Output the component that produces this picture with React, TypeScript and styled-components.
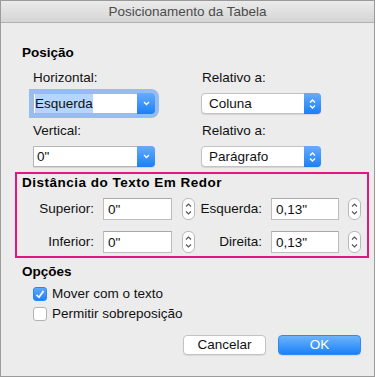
import React from 'react';
import styled, { createGlobalStyle } from 'styled-components';

const GlobalStyle = createGlobalStyle`
  html, body {
    margin: 0;
    padding: 0;
    background: #ffffff;
  }
  body {
    font-family: "Liberation Sans", Arial, sans-serif;
    font-size: 13.5px;
    color: #111;
  }
`;

// --- Window chrome ---
const Window = styled.div`
  box-sizing: border-box;
  width: 375px;
  height: 377px;
  border: 1px solid #9b9b9b;
  background: #ececec;
  display: flex;
  flex-direction: column;
`;

const TitleBar = styled.div`
  height: 21px;
  border-bottom: 1px solid #b1b1b1;
  background: linear-gradient(#ebebeb, #d5d5d5);
  display: flex;
  align-items: center;
  justify-content: center;
  color: #4b4b4b;
  line-height: 16px;
`;

const Content = styled.div`
  display: flex;
  flex-direction: column;
  padding: 22px 13px 0 0;
`;

const SectionTitle = styled.div<{ $top?: number }>`
  font-weight: bold;
  line-height: 16px;
  margin-top: ${({ $top }) => $top ?? 0}px;
  padding-left: 21px;
  color: #000;
`;

// --- Posição grid ---
const PositionGrid = styled.div`
  display: grid;
  grid-template-columns: 168px 120px;
  row-gap: 9px;
  margin: 9px 0 0 32px;
`;

const FieldGroup = styled.div`
  display: flex;
  flex-direction: column;
  gap: 7px;
`;

const Label = styled.div<{ $indent?: number }>`
  line-height: 16px;
  padding-left: ${({ $indent }) => $indent ?? 0}px;
  color: #111;
`;

const SelectWrap = styled.div<{ $w: number; $focus?: boolean; $popup?: boolean }>`
  box-sizing: border-box;
  width: ${({ $w }) => $w}px;
  height: 21px;
  display: flex;
  background: #fff;
  border: 1px solid ${({ $popup }) => ($popup ? '#c4c4c4' : '#b6b6b6')};
  border-radius: ${({ $popup }) => ($popup ? '4px' : '0 4px 4px 0')};
  box-shadow: ${({ $focus }) =>
    $focus ? '0 0 0 4px #95bdf1' : '0 1px 1px rgba(0,0,0,0.1)'};
`;

const SelectText = styled.div<{ $pad: number }>`
  flex: 1;
  display: flex;
  align-items: center;
  padding-left: ${({ $pad }) => $pad}px;
  color: #111;
  white-space: nowrap;
`;

const Highlight = styled.span`
  background: #b4d5fe;
  line-height: 19px;
`;

const ArrowButton = styled.div<{ $w: number }>`
  width: ${({ $w }) => $w}px;
  margin: -1px -1px -1px 0;
  border-radius: 0 4px 4px 0;
  background: linear-gradient(#67acfb, #1a7ff8);
  display: flex;
  align-items: center;
  justify-content: center;
`;

// --- Distância box ---
const HighlightBox = styled.div`
  box-sizing: border-box;
  width: 354px;
  height: 86px;
  margin: 5px 0 0 14px;
  border: 2px solid #e3177e;
  padding: 1px 0 0 0;
  display: flex;
  flex-direction: column;
`;

const BoxTitle = styled.div`
  font-weight: bold;
  line-height: 16px;
  letter-spacing: 0.5px;
  padding-left: 5px;
  color: #000;
`;

const SpacingRow = styled.div<{ $top: number }>`
  display: flex;
  align-items: center;
  height: 22px;
  margin-top: ${({ $top }) => $top}px;
`;

const RowLabel = styled.div<{ $w: number }>`
  width: ${({ $w }) => $w}px;
  text-align: right;
  margin-right: 9px;
  line-height: 16px;
  color: #111;
`;

const TextField = styled.div<{ $w: number }>`
  box-sizing: border-box;
  width: ${({ $w }) => $w}px;
  height: 22px;
  background: #fff;
  border: 1px solid #bdbdbd;
  border-top-color: #a9a9a9;
  display: flex;
  align-items: center;
  padding-left: 4px;
  color: #111;
`;

const Stepper = styled.div<{ $gap: number }>`
  box-sizing: border-box;
  width: 13px;
  height: 22px;
  margin-left: ${({ $gap }) => $gap}px;
  border: 1px solid #b9b9b9;
  border-radius: 6px;
  background: #fff;
  display: flex;
  flex-direction: column;
  align-items: center;
  justify-content: space-between;
  padding: 4px 0;
`;

// --- Opções ---
const CheckRow = styled.label<{ $top: number }>`
  display: flex;
  align-items: center;
  height: 18px;
  margin-top: ${({ $top }) => $top}px;
  padding-left: 32px;
  gap: 5px;
  line-height: 16px;
  color: #111;
`;

const CheckBox = styled.span<{ $checked?: boolean }>`
  box-sizing: border-box;
  width: 14px;
  height: 14px;
  border-radius: 3px;
  display: flex;
  align-items: center;
  justify-content: center;
  border: 1px solid ${({ $checked }) => ($checked ? '#2a86f5' : '#b3b3b3')};
  background: ${({ $checked }) =>
    $checked ? 'linear-gradient(#5eaafc, #1f80f8)' : '#fff'};
`;

const ButtonBar = styled.div`
  display: flex;
  justify-content: flex-end;
  gap: 12px;
  margin-top: 12px;
`;

const Button = styled.button<{ $primary?: boolean }>`
  box-sizing: border-box;
  width: 83px;
  height: 20px;
  padding: 0;
  font: inherit;
  line-height: 16px;
  border-radius: 4px;
  border: 1px solid ${({ $primary }) => ($primary ? '#2f89f6' : '#c3c3c3')};
  background: ${({ $primary }) =>
    $primary ? 'linear-gradient(#6db4fb, #1b81f9)' : '#fff'};
  color: ${({ $primary }) => ($primary ? '#fff' : '#111')};
  box-shadow: 0 1px 1px rgba(0, 0, 0, 0.08);
`;

// --- Glyphs ---
const ChevronDown = () => (
  <svg width="7" height="5" viewBox="0 0 7 5">
    <path d="M1 1 L3.5 3.5 L6 1" fill="none" stroke="#fff" strokeWidth="1.3" />
  </svg>
);

const UpDown = () => (
  <svg width="7" height="12" viewBox="0 0 7 12">
    <path d="M1 4.5 L3.5 2 L6 4.5" fill="none" stroke="#fff" strokeWidth="1.3" />
    <path d="M1 7.5 L3.5 10 L6 7.5" fill="none" stroke="#fff" strokeWidth="1.3" />
  </svg>
);

const Caret = ({ up }: { up?: boolean }) => (
  <svg width="7" height="4" viewBox="0 0 7 4">
    <path
      d={up ? 'M1 3.5 L3.5 1 L6 3.5' : 'M1 0.5 L3.5 3 L6 0.5'}
      fill="none"
      stroke="#555"
      strokeWidth="1.1"
    />
  </svg>
);

const Check = () => (
  <svg width="10" height="9" viewBox="0 0 10 9">
    <path d="M1.5 4.8 L4 7.3 L8.5 1" fill="none" stroke="#fff" strokeWidth="1.7" />
  </svg>
);

const Spin = ({ gap }: { gap: number }) => (
  <Stepper $gap={gap}>
    <Caret up />
    <Caret />
  </Stepper>
);

export default function App() {
  return (
    <>
      <GlobalStyle />
      <Window>
        <TitleBar>Posicionamento da Tabela</TitleBar>
        <Content>
          <SectionTitle>Posição</SectionTitle>
          <PositionGrid>
            <FieldGroup>
              <Label>Horizontal:</Label>
              <SelectWrap $w={122} $focus>
                <SelectText $pad={1}>
                  <Highlight>Esquerda</Highlight>
                </SelectText>
                <ArrowButton $w={18}>
                  <ChevronDown />
                </ArrowButton>
              </SelectWrap>
            </FieldGroup>
            <FieldGroup>
              <Label $indent={1}>Relativo a:</Label>
              <SelectWrap $w={120} $popup>
                <SelectText $pad={7}>Coluna</SelectText>
                <ArrowButton $w={17}>
                  <UpDown />
                </ArrowButton>
              </SelectWrap>
            </FieldGroup>
            <FieldGroup>
              <Label>Vertical:</Label>
              <SelectWrap $w={122}>
                <SelectText $pad={3}>0"</SelectText>
                <ArrowButton $w={18}>
                  <ChevronDown />
                </ArrowButton>
              </SelectWrap>
            </FieldGroup>
            <FieldGroup>
              <Label $indent={1}>Relativo a:</Label>
              <SelectWrap $w={120} $popup>
                <SelectText $pad={7}>Parágrafo</SelectText>
                <ArrowButton $w={17}>
                  <UpDown />
                </ArrowButton>
              </SelectWrap>
            </FieldGroup>
          </PositionGrid>

          <HighlightBox>
            <BoxTitle>Distância do Texto Em Redor</BoxTitle>
            <SpacingRow $top={7}>
              <RowLabel $w={77}>Superior:</RowLabel>
              <TextField $w={69}>0"</TextField>
              <Spin gap={10} />
              <RowLabel $w={67}>Esquerda:</RowLabel>
              <TextField $w={68}>0,13"</TextField>
              <Spin gap={9} />
            </SpacingRow>
            <SpacingRow $top={11}>
              <RowLabel $w={77}>Inferior:</RowLabel>
              <TextField $w={69}>0"</TextField>
              <Spin gap={10} />
              <RowLabel $w={67}>Direita:</RowLabel>
              <TextField $w={68}>0,13"</TextField>
              <Spin gap={9} />
            </SpacingRow>
          </HighlightBox>

          <SectionTitle $top={6}>Opções</SectionTitle>
          <CheckRow $top={5}>
            <CheckBox $checked>
              <Check />
            </CheckBox>
            Mover com o texto
          </CheckRow>
          <CheckRow $top={2}>
            <CheckBox />
            Permitir sobreposição
          </CheckRow>

          <ButtonBar>
            <Button>Cancelar</Button>
            <Button $primary>OK</Button>
          </ButtonBar>
        </Content>
      </Window>
    </>
  );
}
